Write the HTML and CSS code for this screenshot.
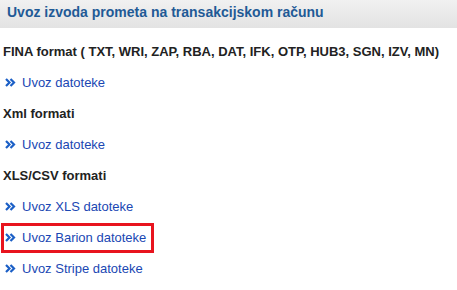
FILE: index.html
```html
<!DOCTYPE html>
<html>
<head>
<meta charset="utf-8">
<link rel="stylesheet" href="styles.css">
</head>
<body>
<div class="header">Uvoz izvoda prometa na transakcijskom računu</div>
<div class="content">
  <div class="title">FINA format ( TXT, WRI, ZAP, RBA, DAT, IFK, OTP, HUB3, SGN, IZV, MN)</div>
  <div class="row"><a class="link" href="#"><svg class="ico" viewBox="0 0 11 9" width="11" height="9"><path d="M1 1 L4.5 4.5 L1 8 M5.5 1 L9 4.5 L5.5 8" fill="none" stroke="#1b5fc6" stroke-width="2.2"/></svg><span>Uvoz datoteke</span></a></div>
  <div class="title">Xml formati</div>
  <div class="row"><a class="link" href="#"><svg class="ico" viewBox="0 0 11 9" width="11" height="9"><path d="M1 1 L4.5 4.5 L1 8 M5.5 1 L9 4.5 L5.5 8" fill="none" stroke="#1b5fc6" stroke-width="2.2"/></svg><span>Uvoz datoteke</span></a></div>
  <div class="title">XLS/CSV formati</div>
  <div class="row"><a class="link" href="#"><svg class="ico" viewBox="0 0 11 9" width="11" height="9"><path d="M1 1 L4.5 4.5 L1 8 M5.5 1 L9 4.5 L5.5 8" fill="none" stroke="#1b5fc6" stroke-width="2.2"/></svg><span>Uvoz XLS datoteke</span></a></div>
  <div class="row"><a class="link highlight" href="#"><svg class="ico" viewBox="0 0 11 9" width="11" height="9"><path d="M1 1 L4.5 4.5 L1 8 M5.5 1 L9 4.5 L5.5 8" fill="none" stroke="#1b5fc6" stroke-width="2.2"/></svg><span>Uvoz Barion datoteke</span></a></div>
  <div class="row"><a class="link" href="#"><svg class="ico" viewBox="0 0 11 9" width="11" height="9"><path d="M1 1 L4.5 4.5 L1 8 M5.5 1 L9 4.5 L5.5 8" fill="none" stroke="#1b5fc6" stroke-width="2.2"/></svg><span>Uvoz Stripe datoteke</span></a></div>
</div>
</body>
</html>
```
FILE: styles.css
```css
html, body {
  margin: 0;
  padding: 0;
  background: #ffffff;
  font-family: "Liberation Sans", Arial, sans-serif;
}
.header {
  height: 24px;
  line-height: 24px;
  padding: 0 0 4px 7px;
  background: linear-gradient(#f1f1f1, #e3e3e3);
  color: #1f5a96;
  font-weight: bold;
  font-size: 14px;
  white-space: nowrap;
}
.content {
  padding-top: 8px;
}
.title, .row {
  height: 31px;
  display: flex;
  align-items: center;
  white-space: nowrap;
}
.title {
  padding-left: 3px;
  font-weight: bold;
  font-size: 13px;
  color: #222222;
}
.row {
  padding-left: 4px;
}
.link {
  display: inline-flex;
  align-items: center;
  height: 24px;
  padding-right: 5px;
  text-decoration: none;
  color: #1a47b3;
  font-size: 13px;
}
.ico {
  margin-left: 1px;
  margin-right: 6px;
}
.highlight {
  outline: 3px solid #e8141e;
}
```
